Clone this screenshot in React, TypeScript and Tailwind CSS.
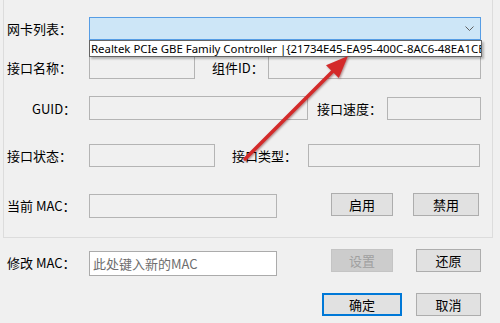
import React from 'react';

const cjk = "font-['Noto_Sans_CJK_SC','Microsoft_YaHei',sans-serif]";

function Label({ children, className = '' }: { children: React.ReactNode; className?: string }) {
  return (
    <span className={`shrink-0 text-[13px] leading-none text-black whitespace-nowrap ${className}`}>{children}</span>
  );
}

function Box({ className = '' }: { className?: string }) {
  return <div className={`shrink-0 border border-[#b4b4b4] bg-[#f0f0f0] ${className}`} />;
}

function Button({ children, className = '', disabled = false, focused = false }: { children: React.ReactNode; className?: string; disabled?: boolean; focused?: boolean }) {
  const look = disabled
    ? 'border border-[#c4c4c4] bg-[#cccccc] text-[#a0a0a0]'
    : focused
    ? 'border-2 border-[#0078d7] bg-[#e1e1e1] text-black'
    : 'border border-[#adadad] bg-[#e1e1e1] text-black';
  return (
    <div className={`shrink-0 flex items-center justify-center text-[13px] leading-none ${look} ${className}`}>{children}</div>
  );
}

export default function App() {
  return (
    <div className={`relative w-[500px] h-[323px] overflow-hidden bg-[#f0f0f0] ${cjk}`}>
      {/* group box */}
      <div className="ml-[3px] w-[490px] h-[238px] border-x border-b border-[#dcdcdc] pl-[3px] pt-[17px]">
        {/* 网卡列表 */}
        <div className="flex items-center h-[23px]">
          <Label className="w-[82px]">网卡列表：</Label>
          <div className="relative w-[392px] h-[23px] border border-[#569de5] bg-[#cde6f7]">
            <svg className="absolute right-[6px] top-[8px]" width="9" height="6" viewBox="0 0 9 6">
              <polyline points="0.5,0.5 4.5,4.5 8.5,0.5" fill="none" stroke="#606060" strokeWidth="1" />
            </svg>
          </div>
        </div>

        {/* 接口名称 / 组件ID */}
        <div className="flex items-center h-[23px] mt-[16px]">
          <Label className="w-[82px]">接口名称：</Label>
          <Box className="w-[106px] h-[23px]" />
          <Label className="ml-[17px] w-[56px]">组件ID：</Label>
          <Box className="w-[213px] h-[23px]" />
        </div>

        {/* GUID / 接口速度 */}
        <div className="flex items-center h-[24px] mt-[17px]">
          <Label className="w-[82px] pl-[25px]">GUID：</Label>
          <Box className="w-[219px] h-[24px]" />
          <Label className="ml-[9px] w-[70px]">接口速度：</Label>
          <Box className="w-[94px] h-[23px]" />
        </div>

        {/* 接口状态 / 接口类型 */}
        <div className="flex items-center h-[23px] mt-[24px]">
          <Label className="w-[82px]">接口状态：</Label>
          <Box className="w-[126px] h-[23px]" />
          <Label className="ml-[17px] w-[76px]">接口类型：</Label>
          <Box className="w-[172px] h-[23px]" />
        </div>

        {/* 当前 MAC */}
        <div className="flex items-start h-[25px] mt-[26px]">
          <Label className="w-[82px] self-center">当前 MAC：</Label>
          <Box className="w-[188px] h-[24px] mt-[1px]" />
          <Button className="ml-[54px] w-[62px] h-[23px]">启用</Button>
          <Button className="ml-[20px] w-[66px] h-[23px]">禁用</Button>
        </div>
      </div>

      {/* 修改 MAC */}
      <div className="flex items-start h-[27px] mt-[11px] pl-[7px]">
        <Label className="w-[82px] self-center">修改 MAC：</Label>
        <div className="shrink-0 w-[188px] h-[25px] mt-[2px] border border-[#ababab] bg-white flex items-center pl-[3px] text-[13px] leading-none text-[#6d6d6d]">
          此处键入新的MAC
        </div>
        <Button disabled className="ml-[54px] w-[62px] h-[23px]">设置</Button>
        <Button className="ml-[23px] w-[65px] h-[23px]">还原</Button>
      </div>

      {/* 确定 / 取消 */}
      <div className="flex h-[23px] mt-[17px] pl-[322px]">
        <Button focused className="w-[80px] h-[23px]">确定</Button>
        <Button className="ml-[14px] w-[65px] h-[23px]">取消</Button>
      </div>

      {/* open dropdown list */}
      <div className="absolute left-[89px] top-[40px] w-[393px] h-[17px] overflow-hidden border border-[#646464] bg-white shadow-[2px_2px_2px_rgba(0,0,0,0.25)]">
        <div className="pl-[1px] text-[11.4px] leading-[15px] text-black whitespace-nowrap font-['Noto_Sans',sans-serif]">
          Realtek PCIe GBE Family Controller |{'{'}21734E45-EA95-400C-8AC6-48EA1CE5B8A1{'}'}
        </div>
      </div>

      {/* red annotation arrow */}
      <svg className="absolute inset-0 pointer-events-none" width="500" height="323" viewBox="0 0 500 323">
        <g style={{ filter: 'drop-shadow(1px 1px 1px rgba(90,0,0,0.45))' }}>
          <line x1="245" y1="159" x2="334" y2="70" stroke="#d42a2a" strokeWidth="3.5" strokeLinecap="round" />
          <polygon points="348,56 338.8,78 326,65.2" fill="#d42a2a" />
        </g>
      </svg>
    </div>
  );
}
